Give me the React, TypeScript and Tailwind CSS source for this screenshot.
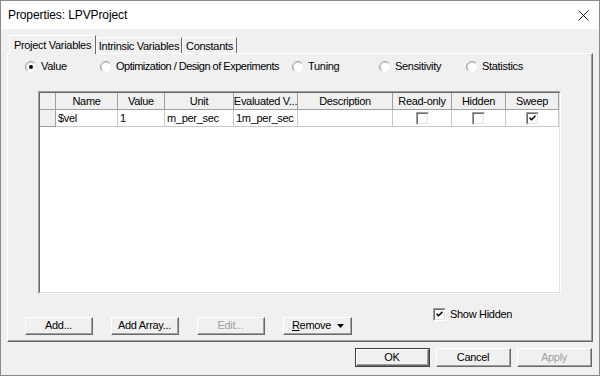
import React from "react";

const font = { fontFamily: '"Liberation Sans", Arial, sans-serif' };

const Radio = ({ checked }: { checked?: boolean }) => (
  <svg width="12" height="12" viewBox="0 0 12 12" className="shrink-0">
    <circle cx="6" cy="6" r="5.5" fill="#fff" />
    <path d="M2.1 9.9 A5.5 5.5 0 0 1 9.9 2.1" stroke="#a0a0a0" fill="none" />
    <path d="M2.8 9.2 A4.5 4.5 0 0 1 9.2 2.8" stroke="#d0d0d0" fill="none" />
    <path d="M9.9 2.1 A5.5 5.5 0 0 1 2.1 9.9" stroke="#e8e8e8" fill="none" />
    {checked && <circle cx="6" cy="6" r="2" fill="#000" />}
  </svg>
);

const CheckBox = ({ checked }: { checked?: boolean }) => (
  <div className="w-[13px] h-[13px] shrink-0 flex border-t border-l border-[#a0a0a0] border-r border-b border-r-white border-b-white">
    <div className="flex-1 bg-white border-t border-l border-[#696969] border-r border-b border-r-[#e3e3e3] border-b-[#e3e3e3] flex items-center justify-center">
      {checked && (
        <svg width="7" height="6" viewBox="0 0 7 6">
          <path d="M0.5 2.7 L2.5 4.7 L6.5 0.7" stroke="#000" strokeWidth="1.6" fill="none" />
        </svg>
      )}
    </div>
  </div>
);

interface BtnProps {
  children: React.ReactNode;
  disabled?: boolean;
  isDefault?: boolean;
  className?: string;
}

const Btn = ({ children, disabled, isDefault, className }: BtnProps) => (
  <div
    className={`${className} ${
      isDefault ? "border border-[#404040]" : ""
    } shrink-0 flex`}
  >
    <div className="flex-1 flex border-t border-l border-white border-r border-b border-r-[#696969] border-b-[#696969]">
      <div
        className={`flex-1 flex items-center justify-center border-r border-b border-r-[#a0a0a0] border-b-[#a0a0a0] bg-[#f0f0f0] ${
          disabled ? "text-[#a0a0a0]" : "text-black"
        }`}
      >
        {children}
      </div>
    </div>
  </div>
);

const columns = [
  { key: "rh", label: "", w: "w-[16px]" },
  { key: "name", label: "Name", w: "w-[62px]" },
  { key: "value", label: "Value", w: "w-[47px]" },
  { key: "unit", label: "Unit", w: "w-[69px]" },
  { key: "eval", label: "Evaluated V...", w: "w-[64px]" },
  { key: "desc", label: "Description", w: "w-[95px]" },
  { key: "ro", label: "Read-only", w: "w-[59px]" },
  { key: "hidden", label: "Hidden", w: "w-[54px]" },
  { key: "sweep", label: "Sweep", w: "w-[53px]" },
];

const row: Record<string, string | boolean> = {
  name: "$vel",
  value: "1",
  unit: "m_per_sec",
  eval: "1m_per_sec",
  desc: "",
  ro: false,
  hidden: false,
  sweep: true,
};

const radios = [
  { label: "Value", w: "w-[75px]", checked: true },
  { label: "Optimization / Design of Experiments", w: "w-[192px]", tight: true },
  { label: "Tuning", w: "w-[87px]" },
  { label: "Sensitivity", w: "w-[87px]" },
  { label: "Statistics", w: "w-[100px]" },
];

export default function App() {
  return (
    <div
      className="w-[600px] h-[376px] border border-[#8a8a8a] bg-[#f0f0f0] flex flex-col text-[11px] tracking-[-0.3px] text-black select-none overflow-hidden"
      style={font}
    >
      {/* title bar */}
      <div className="h-[28px] bg-white flex items-center justify-between pl-[7px] pr-[10px] shrink-0">
        <span className="text-[12px] tracking-[-0.1px]">Properties: LPVProject</span>
        <svg width="11" height="11" viewBox="0 0 11 11">
          <path d="M0.5 0.5 L10.5 10.5 M10.5 0.5 L0.5 10.5" stroke="#222" strokeWidth="1" />
        </svg>
      </div>

      <div className="flex-1 flex flex-col pt-[6px] pl-[6px] pr-[6px]">
        {/* tabs */}
        <div className="flex items-end h-[18px] pl-[2px]">
          <div className="relative z-10 -mb-px h-[19px] w-[87px] bg-[#f0f0f0] border-t border-l border-white border-r border-r-[#696969] flex items-center justify-center">
            Project Variables
          </div>
          <div className="h-[16px] w-[86px] border-t border-l border-white border-r border-r-[#696969] flex items-center justify-center pt-[1px]">
            Intrinsic Variables
          </div>
          <div className="h-[16px] w-[55px] border-t border-l border-white border-r border-r-[#696969] flex items-center justify-center pt-[1px]">
            Constants
          </div>
        </div>

        {/* tab panel */}
        <div className="h-[289px] border-t border-l border-white border-r border-b border-r-[#696969] border-b-[#696969]">
          <div className="h-full flex flex-col border-r border-b border-r-[#a0a0a0] border-b-[#a0a0a0]">
            <div className="flex items-center h-[13px] mt-[6px] pl-[17px]">
              {radios.map((r) => (
                <div key={r.label} className={`${r.w} shrink-0 flex items-center gap-[4px]`}>
                  <Radio checked={r.checked} />
                  <span className={r.tight ? "tracking-[-0.5px]" : ""}>{r.label}</span>
                </div>
              ))}
            </div>

            {/* grid */}
            <div className="ml-[30px] mt-[18px] w-[523px] h-[203px] flex border-t border-l border-[#a0a0a0] border-r border-b border-r-white border-b-white">
              <div className="flex-1 flex flex-col bg-white border-t border-l border-[#696969] border-r border-b border-r-[#e3e3e3] border-b-[#e3e3e3]">
                <div className="flex h-[17px]">
                  {columns.map((c) => (
                    <div
                      key={c.key}
                      className={`${c.w} shrink-0 bg-[#f0f0f0] border-r border-b border-[#a0a0a0] flex items-center justify-center overflow-hidden whitespace-nowrap`}
                    >
                      {c.label}
                    </div>
                  ))}
                </div>
                <div className="flex h-[17px]">
                  {columns.map((c) => {
                    const v = row[c.key];
                    if (c.key === "rh")
                      return (
                        <div key={c.key} className={`${c.w} shrink-0 bg-[#f0f0f0] border-r border-b border-[#a0a0a0]`} />
                      );
                    return (
                      <div
                        key={c.key}
                        className={`${c.w} shrink-0 border-r border-b border-[#c8c8c8] flex items-center overflow-hidden whitespace-nowrap ${
                          typeof v === "boolean" ? "justify-center" : "pl-[2px]"
                        }`}
                      >
                        {typeof v === "boolean" ? <CheckBox checked={v} /> : v}
                      </div>
                    );
                  })}
                </div>
              </div>
            </div>

            {/* bottom of panel */}
            <div className="flex items-start pl-[17px]">
              <div className="flex gap-[18px] mt-[23px]">
                <Btn className="w-[68px] h-[18px]">Add...</Btn>
                <Btn className="w-[68px] h-[18px]">Add Array...</Btn>
                <Btn className="w-[68px] h-[18px]" disabled>
                  Edit...
                </Btn>
                <Btn className="w-[69px] h-[18px]">
                  <span className="flex-1 text-center pl-[2px]">
                    <span className="underline">R</span>emove
                  </span>
                  <svg width="7" height="4" viewBox="0 0 7 4" className="mr-[6px]">
                    <path d="M0 0 H7 L3.5 4 Z" fill="#000" />
                  </svg>
                </Btn>
              </div>
              <div className="flex items-center gap-[4px] mt-[12px] ml-[81px]">
                <CheckBox checked />
                <span>Show Hidden</span>
              </div>
            </div>
          </div>
        </div>

        {/* dialog buttons */}
        <div className="flex justify-end gap-[6px] mt-[6px] mr-[1px]">
          <Btn className="w-[75px] h-[19px]" isDefault>
            OK
          </Btn>
          <Btn className="w-[75px] h-[19px]">Cancel</Btn>
          <Btn className="w-[75px] h-[19px]" disabled>
            Apply
          </Btn>
        </div>
      </div>
    </div>
  );
}
